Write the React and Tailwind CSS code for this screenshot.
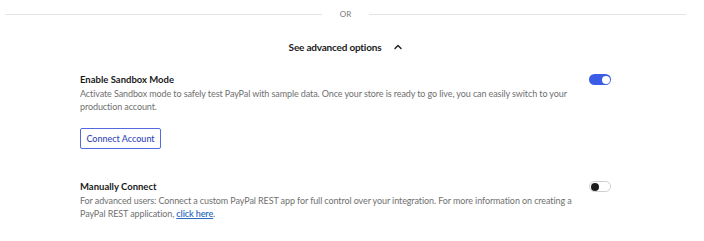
import React from "react";

function Toggle({ on }) {
  return on ? (
    <div className="w-[22px] h-[11px] rounded-full bg-[#3a5ce6] flex items-center justify-end pr-[1.5px] shrink-0">
      <div className="w-[8px] h-[8px] rounded-full bg-white" />
    </div>
  ) : (
    <div className="w-[22px] h-[11px] rounded-full bg-white border border-[#cfcfcf] flex items-center pl-[1px] shrink-0">
      <div className="w-[8px] h-[8px] rounded-full bg-[#1c1c1c]" />
    </div>
  );
}

function Setting({ title, on, children }) {
  return (
    <div className="flex items-start">
      <div className="w-[495px]">
        <p className="text-[9.5px] leading-[14px] font-bold text-[#1b1b1b]">{title}</p>
        <div className="text-[9px] leading-[13px] text-[#707070] tracking-[-0.1px]">{children}</div>
      </div>
      <div className="ml-auto pt-[1px]">
        <Toggle on={on} />
      </div>
    </div>
  );
}

export default function App() {
  return (
    <div className="w-[704px] h-[241px] bg-white font-['Lato',sans-serif] overflow-hidden">
      <div className="flex items-center pl-[5px] pr-[18px] pt-[9px]">
        <div className="flex-1 h-px bg-[#e4e4e4]" />
        <span className="px-[18px] text-[8px] leading-[10px] text-[#777]">OR</span>
        <div className="flex-1 h-px bg-[#e4e4e4]" />
      </div>

      <div className="flex items-center justify-center gap-[13px] mt-[21px] pl-[5px] pr-[18px]">
        <span className="text-[10px] leading-[14px] font-bold text-[#1b1b1b] tracking-[-0.2px]">
          See advanced options
        </span>
        <svg width="8" height="6" viewBox="0 0 8 6" fill="none">
          <path d="M1 4.5L4 1.5L7 4.5" stroke="#1b1b1b" strokeWidth="1.4" strokeLinecap="round" strokeLinejoin="round" />
        </svg>
      </div>

      <div className="ml-[80px] w-[531px] mt-[19px]">
        <Setting title="Enable Sandbox Mode" on>
          Activate Sandbox mode to safely test PayPal with sample data. Once your store is ready to go live, you can
          easily switch to your production account.
        </Setting>
        <button className="mt-[15px] w-[81px] h-[21px] rounded-[2px] border border-[#5468e0] text-[9px] text-[#3246b8] font-medium">
          Connect Account
        </button>

        <div className="mt-[31px]">
          <Setting title="Manually Connect" on={false}>
            For advanced users: Connect a custom PayPal REST app for full control over your integration. For more
            information on creating a PayPal REST application,{" "}
            <a href="#" className="text-[#2d6cc0] underline font-semibold">
              click here
            </a>
            .
          </Setting>
        </div>
      </div>
    </div>
  );
}
